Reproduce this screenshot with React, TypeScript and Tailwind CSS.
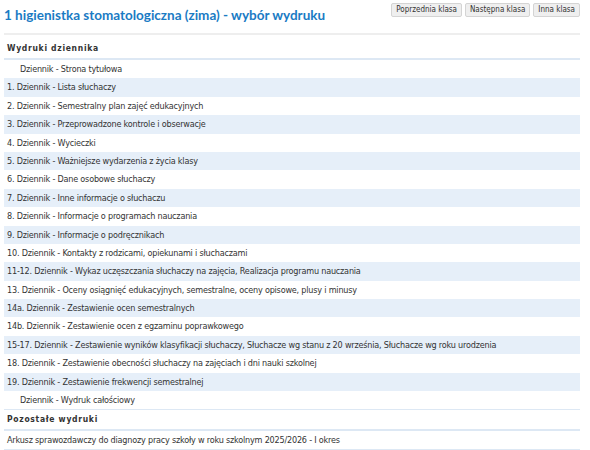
import React from 'react';

const rows = [
  { label: 'Dziennik - Strona tytułowa', indent: true },
  { label: '1. Dziennik - Lista słuchaczy' },
  { label: '2. Dziennik - Semestralny plan zajęć edukacyjnych' },
  { label: '3. Dziennik - Przeprowadzone kontrole i obserwacje' },
  { label: '4. Dziennik - Wycieczki' },
  { label: '5. Dziennik - Ważniejsze wydarzenia z życia klasy' },
  { label: '6. Dziennik - Dane osobowe słuchaczy' },
  { label: '7. Dziennik - Inne informacje o słuchaczu' },
  { label: '8. Dziennik - Informacje o programach nauczania' },
  { label: '9. Dziennik - Informacje o podręcznikach' },
  { label: '10. Dziennik - Kontakty z rodzicami, opiekunami i słuchaczami' },
  { label: '11-12. Dziennik - Wykaz uczęszczania słuchaczy na zajęcia, Realizacja programu nauczania' },
  { label: '13. Dziennik - Oceny osiągnięć edukacyjnych, semestralne, oceny opisowe, plusy i minusy' },
  { label: '14a. Dziennik - Zestawienie ocen semestralnych' },
  { label: '14b. Dziennik - Zestawienie ocen z egzaminu poprawkowego' },
  { label: '15-17. Dziennik - Zestawienie wyników klasyfikacji słuchaczy, Słuchacze wg stanu z 20 września, Słuchacze wg roku urodzenia' },
  { label: '18. Dziennik - Zestawienie obecności słuchaczy na zajęciach i dni nauki szkolnej' },
  { label: '19. Dziennik - Zestawienie frekwencji semestralnej' },
  { label: 'Dziennik - Wydruk całościowy', indent: true },
];

export default function App() {
  return (
    <div className="min-h-screen bg-white px-[4px] pt-[3px] text-[#333]" style={{ fontFamily: '"DejaVu Sans Condensed", "DejaVu Sans", sans-serif' }}>
      <div className="w-[576px]">
        {/* Header */}
        <div className="flex items-start justify-between border-b-2 border-[#eeeeee] pb-[9px]">
          <h1 className="whitespace-nowrap pt-[3px] text-[13.5px] leading-[18px] font-bold text-[#1a7bc4]" style={{ fontFamily: 'Lato, sans-serif' }}>
            1 higienistka stomatologiczna (zima) - wybór wydruku
          </h1>
          <div className="flex gap-[3px]">
            <Btn>Poprzednia klasa</Btn>
            <Btn>Następna klasa</Btn>
            <Btn>Inna klasa</Btn>
          </div>
        </div>

        {/* Wydruki dziennika */}
        <div className="mt-[3px]">
          <div className="border-b-2 border-[#dde8f4] px-[3px] pt-[3px] pb-[3px] text-[8.5px] font-bold leading-[14px] tracking-[0.7px]">
            Wydruki dziennika
          </div>
          {rows.map((r, i) => (
            <div
              key={i}
              className={`h-[18.4px] whitespace-nowrap text-[9px] leading-[18.4px] tracking-[-0.2px] ${i % 2 === 1 ? 'bg-[#e6eff9]' : 'bg-white'} ${r.indent ? 'pl-[16px]' : 'pl-[3px]'}`}
            >
              {r.label}
            </div>
          ))}
          <div className="border-b border-[#dde8f4]" />
        </div>

        {/* Pozostałe wydruki */}
        <div className="mt-0">
          <div className="border-b-2 border-[#dde8f4] px-[3px] pt-[2px] pb-[3px] text-[8.5px] font-bold leading-[14px] tracking-[0.7px]">
            Pozostałe wydruki
          </div>
          <div className="h-[18.4px] whitespace-nowrap border-b border-[#dde8f4] pl-[3px] text-[9px] leading-[18.4px] tracking-[-0.2px]">
            Arkusz sprawozdawczy do diagnozy pracy szkoły w roku szkolnym 2025/2026 - I okres
          </div>
        </div>
      </div>
    </div>
  );
}

function Btn({ children }: { children: React.ReactNode }) {
  return (
    <button className="h-[14px] whitespace-nowrap rounded-[2px] border border-[#d4d4d4] bg-[#efefef] px-[4px] text-[8px] leading-[12px] text-[#333]">
      {children}
    </button>
  );
}
